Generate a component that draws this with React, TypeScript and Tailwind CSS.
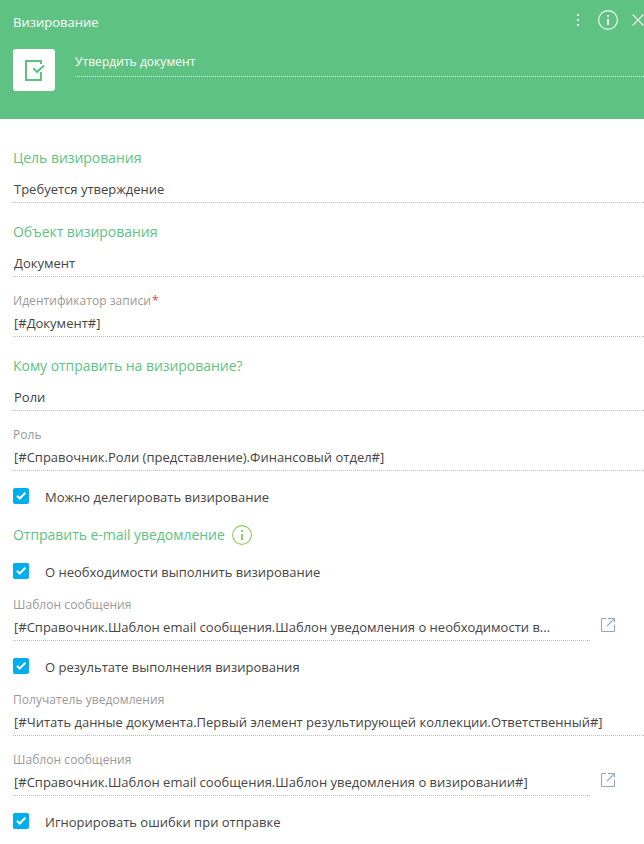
import React from 'react';

const Heading = ({ children }: { children: React.ReactNode }) => (
  <h2 className="flex h-12 items-end pb-[9px] text-[14px] leading-5 tracking-[-0.04px] text-[#5ec382]">{children}</h2>
);

const Value = ({ children }: { children: React.ReactNode }) => (
  <div className="h-[26px] overflow-hidden border-b border-dotted border-[#bdbdbd] pl-px text-[13px] leading-[25px] whitespace-nowrap text-[#444]">
    {children}
  </div>
);

const ExternalLink = () => (
  <svg width="16" height="16" viewBox="0 0 16 16" fill="none" stroke="#8fa6c8" strokeWidth="1">
    <path d="M6 1.5H1.5v13h13V7.5M8 1.5h6.5V5" />
    <path d="M7 9.2l7-7" strokeWidth="1.2" />
  </svg>
);

type FieldProps = { label: string; required?: boolean; link?: boolean; children: React.ReactNode };

const Field = ({ label, required, link, children }: FieldProps) => (
  <div className="flex h-[60px]">
    <div className="min-w-0 flex-1">
      <label className="block h-[34px] pt-4 text-[12px] leading-4 tracking-[0.05px] text-[#999]">
        {label}
        {required && <span className="ml-px text-[#ef4030]">*</span>}
      </label>
      <Value>{children}</Value>
    </div>
    {link && (
      <button className="flex w-[54px] items-start pt-9 pl-[10px]" aria-label="Открыть">
        <ExternalLink />
      </button>
    )}
  </div>
);

const Check = ({ children }: { children: React.ReactNode }) => (
  <label className="flex h-[35px] items-start gap-4 pt-[17px] text-[13px] text-[#444]">
    <span className="h-4 w-4 shrink-0 rounded-[2px] bg-[#00aeef]">
      <svg width="16" height="16" viewBox="0 0 16 16" fill="none" stroke="#fff" strokeWidth="2">
        <path d="M4 7.8l2.7 2.7L12.4 4.8" />
      </svg>
    </span>
    <span className="leading-[18px]">{children}</span>
  </label>
);

const Info = ({ color }: { color: string }) => (
  <svg width="20" height="20" viewBox="0 0 20 20" fill="none">
    <circle cx="10" cy="10" r="9.4" stroke={color} strokeWidth="1.1" />
    <path d="M9 5h2v2H9zM9 9h2v6H9z" fill={color} />
  </svg>
);

export default function App() {
  return (
    <div className="h-[844px] w-[644px] overflow-hidden bg-white font-['Open_Sans','Noto_Sans',sans-serif]">
      <header className="h-[119px] bg-[#5ec382] pl-[13px] text-white">
        <div className="flex h-[49px] items-start">
          <h1 className="flex-1 pt-3 text-[13px] leading-5">Визирование</h1>
          <div className="flex shrink-0 pt-[10px]">
            <svg width="20" height="20" viewBox="0 0 20 20" fill="#fff">
              <path d="M9 4h2v2H9zM9 9h2v2H9zM9 14h2v2H9z" />
            </svg>
            <div className="ml-[10px]">
              <Info color="#fff" />
            </div>
            <svg className="ml-[14px]" width="12" height="20" viewBox="0 0 12 20" fill="none" stroke="#fff" strokeWidth="1.2">
              <path d="M.7 4.7l10.6 10.6M11.3 4.7L.7 15.3" />
            </svg>
          </div>
        </div>
        <div className="flex">
          <div className="h-[42px] w-[42px] rounded-[3px] bg-white">
            <svg width="42" height="42" viewBox="0 0 42 42" fill="none" stroke="#5ec382" strokeWidth="2">
              <path d="M28 15v-3H13v19h15v-8" />
              <path d="M20.3 19.3l3.7 3.7 7-6.6" />
            </svg>
          </div>
          <div className="ml-5 h-7 flex-1 border-b border-dotted border-white text-[12px] leading-[25px] tracking-[0.05px]">
            Утвердить документ
          </div>
        </div>
      </header>
      <main className="pt-[10px] pl-[13px]">
        <Heading>Цель визирования</Heading>
        <Value>Требуется утверждение</Value>
        <Heading>Объект визирования</Heading>
        <Value>Документ</Value>
        <Field label="Идентификатор записи" required>[#Документ#]</Field>
        <Heading>Кому отправить на визирование?</Heading>
        <Value>Роли</Value>
        <Field label="Роль">[#Справочник.Роли (представление).Финансовый отдел#]</Field>
        <Check>Можно делегировать визирование</Check>
        <div className="flex h-10 pt-[19px]">
          <h2 className="w-[219px] text-[14px] leading-5 tracking-[-0.04px] whitespace-nowrap text-[#5ec382]">
            Отправить e-mail уведомление
          </h2>
          <Info color="#8ecb60" />
        </div>
        <Check>О необходимости выполнить визирование</Check>
        <Field label="Шаблон сообщения" link>
          [#Справочник.Шаблон email сообщения.Шаблон уведомления о необходимости в...
        </Field>
        <Check>О результате выполнения визирования</Check>
        <Field label="Получатель уведомления">
          [#Читать данные документа.Первый элемент результирующей коллекции.Ответственный#]
        </Field>
        <Field label="Шаблон сообщения" link>
          [#Справочник.Шаблон email сообщения.Шаблон уведомления о визировании#]
        </Field>
        <Check>Игнорировать ошибки при отправке</Check>
      </main>
    </div>
  );
}
